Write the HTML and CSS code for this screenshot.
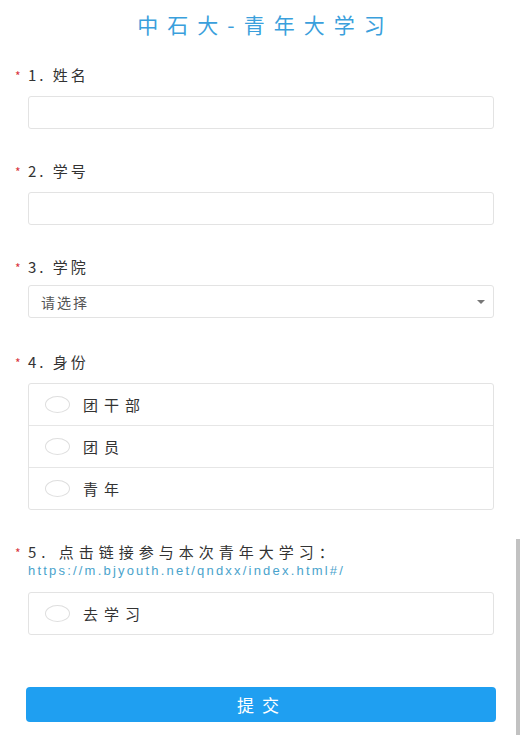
FILE: index.html
```html
<!DOCTYPE html>
<html lang="zh-CN">
<head>
    <meta charset="UTF-8">
    <meta name="viewport" content="width=device-width, initial-scale=1.0">
    <title>中石大-青年大学习</title>
    <link rel="stylesheet" href="styles.css">
</head>
<body>
    <div class="page">
        <h1 class="title">中石大-青年大学习</h1>

        <div class="question">
            <div class="label"><span class="star">*</span>1. 姓名</div>
            <input class="field" type="text">
        </div>

        <div class="question">
            <div class="label"><span class="star">*</span>2. 学号</div>
            <input class="field" type="text">
        </div>

        <div class="question question-wide">
            <div class="label label-tight"><span class="star">*</span>3. 学院</div>
            <div class="field select">
                <span>请选择</span>
                <span class="arrow"></span>
            </div>
        </div>

        <div class="question">
            <div class="label"><span class="star">*</span>4. 身份</div>
            <div class="options">
                <div class="option"><span class="radio"></span>团干部</div>
                <div class="option"><span class="radio"></span>团员</div>
                <div class="option"><span class="radio"></span>青年</div>
            </div>
        </div>

        <div class="question">
            <div class="label label-link"><span class="star">*</span>5. 点击链接参与本次青年大学习：</div>
            <a class="link" href="#">https://m.bjyouth.net/qndxx/index.html#/</a>
            <div class="options">
                <div class="option"><span class="radio"></span>去学习</div>
            </div>
        </div>

        <button class="submit">提交</button>
    </div>

    <!-- scroll indicator -->
    <div class="scroll-thumb"></div>
</body>
</html>
```

FILE: styles.css
```css
body {
    margin: 0;
    background-color: #fff;
    font-family: "Noto Sans CJK SC", "Noto Sans", sans-serif;
    color: #333;
}

.page {
    padding: 12px 28px 0 28px;
}

.title {
    margin: 0 0 29px 0;
    padding-left: 9px;
    font-size: 21px;
    line-height: 24px;
    font-weight: normal;
    text-align: center;
    letter-spacing: 9px;
    color: #3a9fdc;
}

.question {
    margin-bottom: 32px;
}

.question-wide {
    margin-bottom: 34px;
}

.label {
    position: relative;
    font-size: 15px;
    line-height: 20px;
    letter-spacing: 3px;
    color: #333;
    margin-bottom: 11px;
}

.label-tight {
    margin-bottom: 8px;
}

.label-link {
    margin-bottom: 0;
    letter-spacing: 5px;
}

.star {
    position: absolute;
    left: -13px;
    top: 1px;
    font-size: 12px;
    color: #d9363e;
}

.field {
    display: block;
    box-sizing: border-box;
    width: 100%;
    height: 33px;
    border: 1px solid #e3e3e3;
    border-radius: 3px;
    background: #fff;
    outline: none;
}

.select {
    display: flex;
    align-items: center;
    justify-content: space-between;
    padding: 0 8px 0 12px;
    font-size: 14px;
    letter-spacing: 2px;
    color: #555;
}

.arrow {
    width: 0;
    height: 0;
    border-left: 4px solid transparent;
    border-right: 4px solid transparent;
    border-top: 4px solid #777;
}

.link {
    display: block;
    font-family: "Liberation Sans", sans-serif;
    font-size: 13px;
    line-height: 18px;
    letter-spacing: 2.2px;
    color: #4aa3cc;
    text-decoration: none;
    margin-bottom: 12px;
}

.options {
    border: 1px solid #e3e3e3;
    border-radius: 3px;
}

.option {
    display: flex;
    align-items: center;
    height: 41px;
    padding-left: 16px;
    font-size: 15px;
    letter-spacing: 6px;
    color: #333;
    border-top: 1px solid #e6e6e6;
}

.option:first-child {
    border-top: none;
}

.radio {
    box-sizing: border-box;
    width: 25px;
    height: 17px;
    border: 1px solid #dedede;
    border-radius: 50%;
    margin-right: 13px;
}

.submit {
    display: block;
    width: calc(100% + 4px);
    margin: 52px -2px 0 -2px;
    height: 35px;
    padding-left: 8px;
    border: none;
    border-radius: 4px;
    background-color: #1f9ff1;
    color: #fff;
    font-family: "Noto Sans CJK SC", sans-serif;
    font-size: 17px;
    letter-spacing: 8px;
}

.scroll-thumb {
    position: fixed;
    right: 2px;
    top: 539px;
    bottom: 0;
    width: 4px;
    background-color: #c2c2c2;
}
```
